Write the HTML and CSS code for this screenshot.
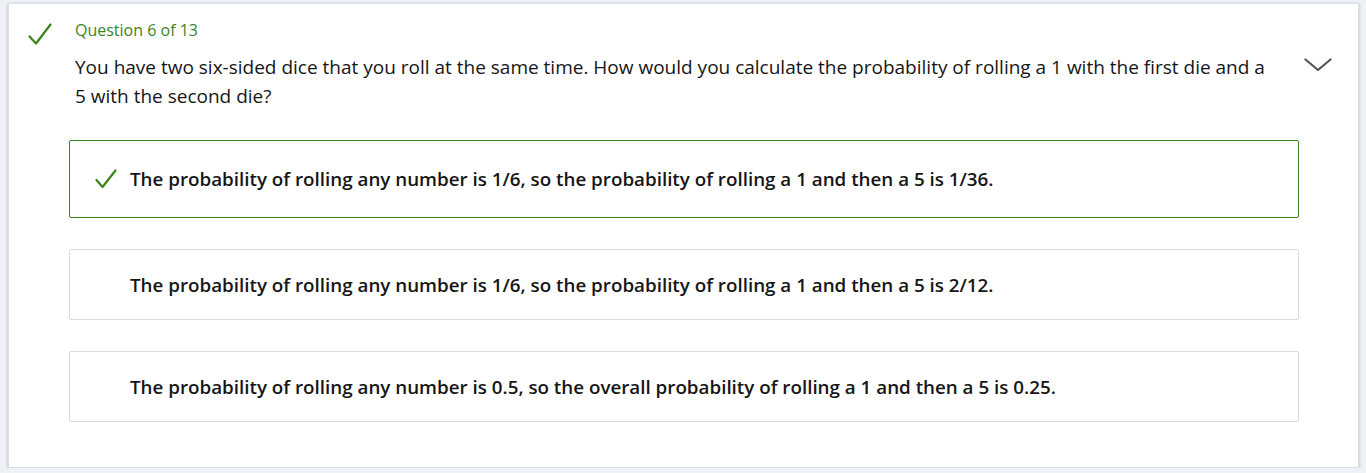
FILE: index.html
```html
<!DOCTYPE html>
<html lang="en">
<head>
<meta charset="utf-8">
<title>Question 6 of 13</title>
<link rel="stylesheet" href="styles.css">
</head>
<body>
<div class="card">
  <div class="head">
    <svg class="status" width="24" height="24" viewBox="0 0 24 24" aria-hidden="true"><path d="M1.5 13.5 L8 20.5 L22.5 1.5" fill="none" stroke="#3a861c" stroke-width="2.2" stroke-linecap="round" stroke-linejoin="round"/></svg>
    <div class="body">
      <div class="label">Question 6 of 13</div>
      <div class="question">You have two six-sided dice that you roll at the same time. How would you calculate the probability of rolling a 1 with the first die and a 5 with the second die?</div>
    </div>
    <svg class="chevron" width="28" height="14" viewBox="0 0 28 14" aria-hidden="true"><path d="M1.5 1.5 L14 12 L26.5 1.5" fill="none" stroke="#555" stroke-width="2.2" stroke-linecap="round" stroke-linejoin="round"/></svg>
  </div>
  <div class="answers">
    <div class="answer correct">
      <svg class="tick" width="22" height="20" viewBox="0 0 22 20" aria-hidden="true"><path d="M1.5 11 L7.5 18 L20.5 1.5" fill="none" stroke="#3a861c" stroke-width="2.2" stroke-linecap="round" stroke-linejoin="round"/></svg>
      <span>The probability of rolling any number is 1/6, so the probability of rolling a 1 and then a 5 is 1/36.</span>
    </div>
    <div class="answer">
      <span>The probability of rolling any number is 1/6, so the probability of rolling a 1 and then a 5 is 2/12.</span>
    </div>
    <div class="answer">
      <span>The probability of rolling any number is 0.5, so the overall probability of rolling a 1 and then a 5 is 0.25.</span>
    </div>
  </div>
</div>
</body>
</html>
```

FILE: styles.css
```css
html, body {
  margin: 0;
  padding: 0;
}
body {
  background: #eef1f5;
  font-family: "Open Sans", "Noto Sans", sans-serif;
  color: #161616;
}
.card {
  margin: 3px 7px 0 8px;
  height: 465px;
  box-sizing: border-box;
  background: #fff;
  border: 1px solid #d9dce0;
  box-shadow: 0 1px 3px rgba(0, 0, 0, 0.25);
  padding: 15px 26px 0 19px;
}
.head {
  display: flex;
  align-items: flex-start;
}
.status {
  flex: none;
  margin-top: 4px;
  margin-right: 23px;
}
.body {
  flex: 1;
  padding-right: 24px;
}
.label {
  font-size: 16px;
  line-height: 22px;
  color: #3a861c;
}
.question {
  margin-top: 12px;
  font-size: 19px;
  line-height: 29px;
}
.chevron {
  flex: none;
  margin-top: 39px;
}
.answers {
  margin: 29px 0 0 41px;
  width: 1230px;
  display: flex;
  flex-direction: column;
  gap: 31px;
}
.answer {
  box-sizing: border-box;
  height: 71px;
  border: 1px solid #dadada;
  border-radius: 2px;
  display: flex;
  align-items: center;
  padding-left: 60px;
  font-size: 18.8px;
  font-weight: 600;
}
.answer.correct {
  height: 78px;
  border-color: #3a861c;
  padding-left: 25px;
}
.tick {
  flex: none;
  margin-right: 13px;
}
```
